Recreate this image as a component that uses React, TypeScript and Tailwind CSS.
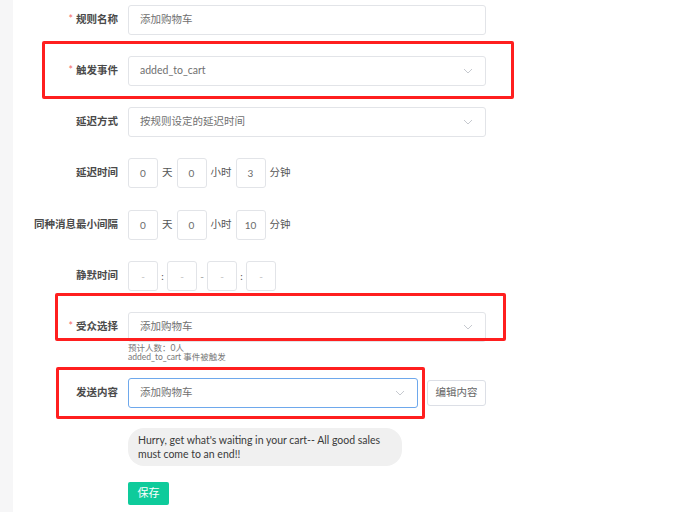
import type { ReactNode } from "react";

const font = { fontFamily: '"Lato", "Noto Sans CJK SC", sans-serif' };

function Chevron() {
    return (
        <svg width="10" height="6" viewBox="0 0 10 6" className="shrink-0">
            <path d="M1 1 L5 5 L9 1" fill="none" stroke="#c6c9cf" strokeWidth="1" />
        </svg>
    );
}

function Row({ label, required, children }: { label: string; required?: boolean; children: ReactNode }) {
    return (
        <div className="flex items-start">
            <div className="w-[105px] h-[30px] flex items-center justify-end pr-0 text-[10.5px] font-bold text-[#4a4a4a]">
                {required && <span className="text-[#f56c6c] mr-[3px] font-normal">*</span>}
                {label}
            </div>
            <div className="ml-[10px]">{children}</div>
        </div>
    );
}

function Field({ text, select, width = "w-[358px]", focus }: { text: string; select?: boolean; width?: string; focus?: boolean }) {
    return (
        <div className={`${width} h-[30px] rounded-[3px] border ${focus ? "border-[#6ea8ec]" : "border-[#e2e4e8]"} bg-white flex items-center justify-between pl-[11px] pr-[12px] text-[10.5px] text-[#707070]`}>
            <span>{text}</span>
            {select && <Chevron />}
        </div>
    );
}

function Box({ value, dim }: { value: string; dim?: boolean }) {
    return (
        <div className={`w-[30px] h-[30px] rounded-[3px] border border-[#e2e4e8] flex items-center justify-center text-[10px] ${dim ? "text-[#c0c0c0]" : "text-[#6b6b6b]"}`}>
            {value}
        </div>
    );
}

function Unit({ children }: { children: ReactNode }) {
    return <span className="text-[10.5px] text-[#555] px-[4px]">{children}</span>;
}

export default function App() {
    return (
        <div className="relative w-[688px] h-[512px] overflow-hidden bg-white flex" style={font}>
            <div className="w-[13px] h-full bg-[#f6f6f7]" />
            <div className="flex-1 flex flex-col pt-[5px]">
                <Row label="规则名称" required>
                    <Field text="添加购物车" />
                </Row>
                <div className="mt-[21px]">
                    <Row label="触发事件" required>
                        <Field text="added_to_cart" select />
                    </Row>
                </div>
                <div className="mt-[21px]">
                    <Row label="延迟方式">
                        <Field text="按规则设定的延迟时间" select />
                    </Row>
                </div>
                <div className="mt-[21px]">
                    <Row label="延迟时间">
                        <div className="flex items-center">
                            <Box value="0" />
                            <Unit>天</Unit>
                            <Box value="0" />
                            <Unit>小时</Unit>
                            <Box value="3" />
                            <Unit>分钟</Unit>
                        </div>
                    </Row>
                </div>
                <div className="mt-[22px]">
                    <Row label="同种消息最小间隔">
                        <div className="flex items-center">
                            <Box value="0" />
                            <Unit>天</Unit>
                            <Box value="0" />
                            <Unit>小时</Unit>
                            <Box value="10" />
                            <Unit>分钟</Unit>
                        </div>
                    </Row>
                </div>
                <div className="mt-[21px]">
                    <Row label="静默时间">
                        <div className="flex items-center">
                            <Box value="-" dim />
                            <span className="w-[9px] text-center text-[10px] text-[#555]">:</span>
                            <Box value="-" dim />
                            <span className="w-[10px] text-center text-[10px] text-[#999]">-</span>
                            <Box value="-" dim />
                            <span className="w-[9px] text-center text-[10px] text-[#555]">:</span>
                            <Box value="-" dim />
                        </div>
                    </Row>
                </div>
                <div className="mt-[21px]">
                    <Row label="受众选择" required>
                        <Field text="添加购物车" select />
                        <div className="mt-[2px] text-[8.5px] leading-[9px] text-[#777]">
                            <div>预计人数：0人</div>
                            <div>added_to_cart 事件被触发</div>
                        </div>
                    </Row>
                </div>
                <div className="mt-[16px]">
                    <Row label="发送内容">
                        <div className="flex items-center">
                            <Field text="添加购物车" select width="w-[290px]" focus />
                            <button className="ml-[9px] h-[26px] w-[59px] rounded-[3px] border border-[#dcdfe6] bg-white text-[10.5px] text-[#666]">
                                编辑内容
                            </button>
                        </div>
                    </Row>
                </div>
                <div className="ml-[115px] mt-[20px] w-[274px] rounded-[16px] bg-[#f0f0f0] px-[10px] py-[5px] text-[10.5px] leading-[14px] text-[#3a3a3a]">
                    Hurry, get what's waiting in your cart-- All good sales must come to an end!!
                </div>
                <div className="ml-[115px] mt-[13px]">
                    <button className="w-[41px] h-[23px] rounded-[2px] bg-[#0ecb9b] text-white text-[11px]">保存</button>
                </div>
            </div>

            {/* red annotation boxes */}
            <div className="absolute left-[42px] top-[41px] w-[472px] h-[58px] border-[3px] border-[#ff1f1f] rounded-[2px]" />
            <div className="absolute left-[55px] top-[293px] w-[451px] h-[48px] border-[3px] border-[#ff1f1f] rounded-[2px]" />
            <div className="absolute left-[56px] top-[367px] w-[369px] h-[52px] border-[3px] border-[#ff1f1f] rounded-[2px]" />
        </div>
    );
}
